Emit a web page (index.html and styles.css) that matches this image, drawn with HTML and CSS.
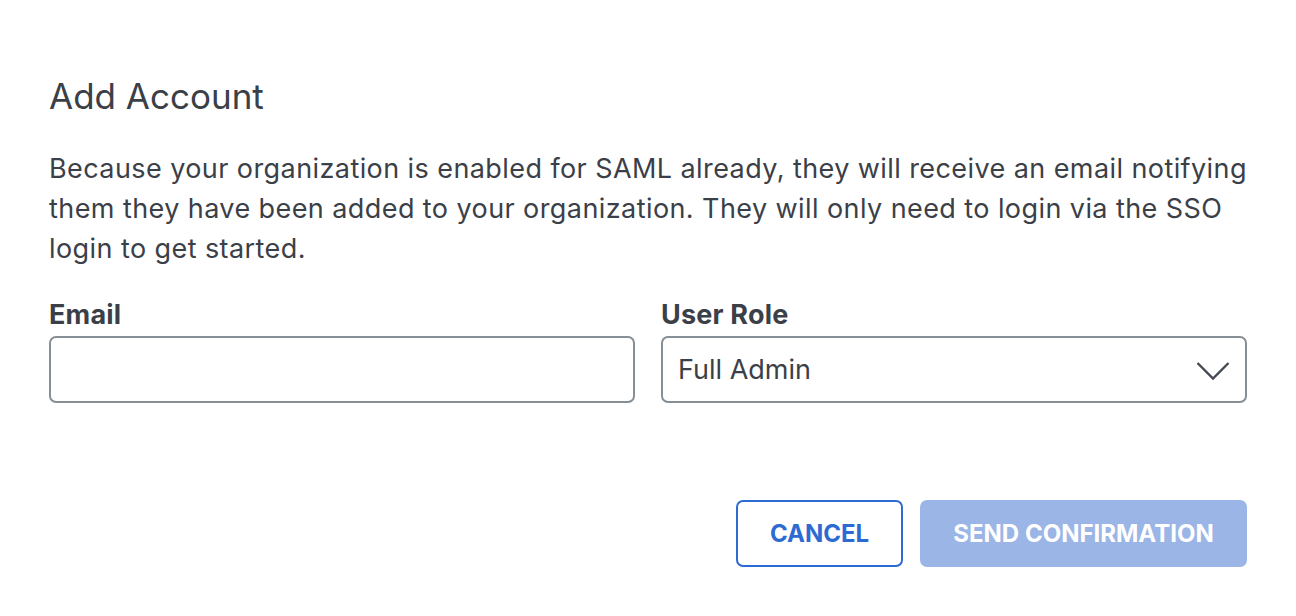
FILE: index.html
```html
<!DOCTYPE html>
<html>
<head>
<meta charset="utf-8">
<link rel="stylesheet" href="styles.css">
</head>
<body>
<div class="dialog">
  <h1 class="title">Add Account</h1>
  <p class="desc">Because your organization is enabled for SAML already, they will receive an email notifying them they have been added to your organization. They will only need to login via the SSO login to get started.</p>
  <div class="fields">
    <div class="field">
      <label class="label">Email</label>
      <div class="input"></div>
    </div>
    <div class="field">
      <label class="label">User Role</label>
      <div class="input select">
        <span>Full Admin</span>
        <svg class="chev" width="34" height="20" viewBox="0 0 34 20"><path d="M1.5 2 L17 17.5 L32.5 2" fill="none" stroke="#454a52" stroke-width="2.4"/></svg>
      </div>
    </div>
  </div>
  <div class="actions">
    <button class="btn cancel">CANCEL</button>
    <button class="btn primary">SEND CONFIRMATION</button>
  </div>
</div>
</body>
</html>
```
FILE: styles.css
```css
* { box-sizing: border-box; }
html, body { margin: 0; padding: 0; background: #fff; }
body { font-family: Inter, "Noto Sans", sans-serif; color: #3b4048; }
.dialog { padding: 72px 49px 0 49px; width: 1296px; }
.title { margin: 0; font-size: 35px; font-weight: 400; line-height: 48px; }
.desc { margin: 29px 0 0 0; font-size: 27px; line-height: 40px; letter-spacing: 0.42px; }
.fields { display: grid; grid-template-columns: 1fr 1fr; gap: 26px; margin-top: 28px; }
.field { display: flex; flex-direction: column; }
.label { font-size: 27px; font-weight: 700; line-height: 36px; margin-bottom: 3px; letter-spacing: 0.2px; }
.input { height: 67px; border: 2px solid #868e96; border-radius: 7px; display: flex; align-items: center; padding: 0 16px 0 15px; font-size: 27px; letter-spacing: 0; }
.select { justify-content: space-between; }
.chev { margin-right: -1px; margin-top: 2px; }
.actions { display: flex; justify-content: flex-end; gap: 17px; margin-top: 97px; }
.btn { height: 67px; border-radius: 7px; font-family: Inter, sans-serif; font-weight: 700; font-size: 24px; }
.cancel { width: 167px; background: #fff; border: 2px solid #2d6bd3; color: #2d6bd3; }
.primary { width: 327px; background: #9bb5e6; border: none; color: #fff; }
```
